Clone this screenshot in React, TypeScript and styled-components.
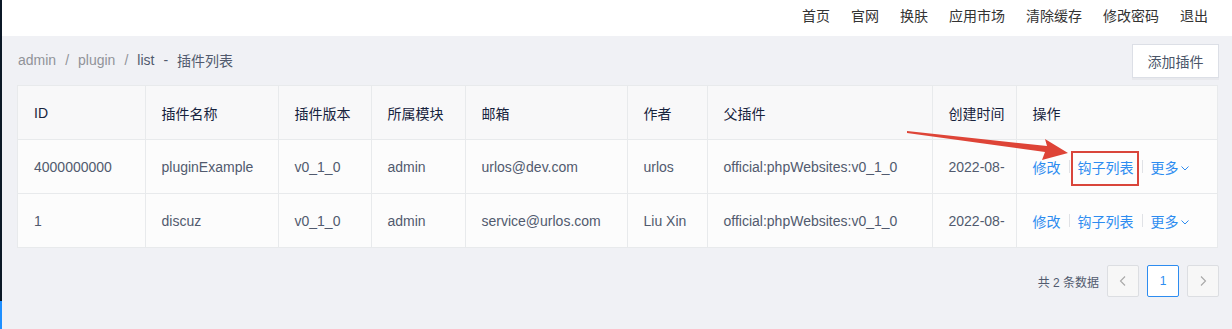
import React from "react";
import styled, { createGlobalStyle } from "styled-components";

const Global = createGlobalStyle`
  html, body { margin: 0; padding: 0; }
  body {
    font-family: "Liberation Sans", "Noto Sans CJK SC", sans-serif;
    background: #f0f1f5;
    -webkit-font-smoothing: antialiased;
  }
`;

const Page = styled.div`
  display: flex;
  width: 1232px;
  height: 329px;
  overflow: hidden;
  position: relative;
  background: #f0f1f5;
`;

const Sidebar = styled.div`
  width: 2px;
  flex: none;
  display: flex;
  flex-direction: column;
  background: #0b1826;
`;

const SidebarActive = styled.div`
  margin-top: auto;
  height: 28px;
  background: #1e8fff;
`;

const Main = styled.div`
  flex: 1;
  display: flex;
  flex-direction: column;
  min-width: 0;
`;

const Header = styled.div`
  height: 36px;
  background: #fff;
  display: flex;
  align-items: center;
  justify-content: flex-end;
  padding-right: 24px;
  gap: 21px;
`;

const NavItem = styled.span`
  font-size: 14px;
  color: #333;
  line-height: 20px;
  margin-top: -4px;
`;

const Content = styled.div`
  padding: 8px 14px 0 15px;
  display: flex;
  flex-direction: column;
`;

const TopRow = styled.div`
  display: flex;
  align-items: flex-start;
  justify-content: space-between;
  height: 34px;
`;

const Crumbs = styled.div`
  display: flex;
  align-items: center;
  gap: 9px;
  font-size: 14px;
  margin-top: 6px;
  margin-left: 1px;
`;

const Crumb = styled.span<{ $current?: boolean }>`
  color: ${(p) => (p.$current ? "#515a6e" : "#909399")};
`;

const AddButton = styled.button`
  width: 87px;
  height: 34px;
  background: #fff;
  border: 1px solid #dcdfe6;
  box-shadow: 0 2px 0 rgba(0, 0, 0, 0.03);
  font-family: inherit;
  font-size: 14px;
  color: #4a5568;
  padding: 0;
  margin-right: -1px;
`;

const TableWrap = styled.div`
  margin-top: 7px;
  border: 1px solid #e8eaec;
  background: #fcfcfc;
  overflow: hidden;
`;

const Table = styled.table`
  border-collapse: collapse;
  table-layout: fixed;
  width: 1198px;
  font-size: 14px;
`;

const Th = styled.th<{ $fixed?: boolean }>`
  height: 53px;
  text-align: left;
  font-weight: normal;
  color: #17233d;
  padding: 0 0 0 16px;
  background: #f8f8f9;
  border-right: 1px solid #e8eaec;
  border-bottom: 1px solid #e8eaec;
  white-space: nowrap;
  overflow: hidden;
  ${(p) =>
    p.$fixed &&
    `position: relative; box-shadow: -4px 0 7px rgba(0,0,0,0.1); border-right: none; background: #fafafa;`}
`;

const Td = styled.td<{ $fixed?: boolean }>`
  height: 53px;
  color: #515a6e;
  padding: 0 0 0 16px;
  border-right: 1px solid #e8eaec;
  border-bottom: 1px solid #e8eaec;
  white-space: nowrap;
  overflow: hidden;
  background: #fcfcfc;
  ${(p) =>
    p.$fixed &&
    `position: relative; box-shadow: -4px 0 7px rgba(0,0,0,0.1); border-right: none; background: #fdfdfd;`}
  tr:last-child & {
    border-bottom: none;
  }
`;

const Actions = styled.div`
  display: flex;
  align-items: center;
`;

const ActionLink = styled.span`
  color: #2d8cf0;
  font-size: 14px;
  display: inline-flex;
  align-items: center;
`;

const Divider = styled.span`
  width: 1px;
  height: 13px;
  background: #e0e2e6;
  margin: 0 8px;
`;

const Pager = styled.div`
  display: flex;
  justify-content: flex-end;
  align-items: center;
  margin-top: 17px;
  gap: 8px;
  margin-right: -1px;
`;

const Total = styled.span`
  font-size: 12px;
  color: #515a6e;
`;

const PageBtn = styled.div<{ $active?: boolean }>`
  width: 32px;
  height: 32px;
  box-sizing: border-box;
  border: 1px solid ${(p) => (p.$active ? "#2d8cf0" : "#dcdee2")};
  background: ${(p) => (p.$active ? "#fff" : "#f7f7f7")};
  color: ${(p) => (p.$active ? "#2d8cf0" : "#aaa")};
  border-radius: 2px;
  display: flex;
  align-items: center;
  justify-content: center;
  font-size: 12px;
`;

const Annotation = styled.svg`
  position: absolute;
  left: 0;
  top: 0;
  pointer-events: none;
`;

const cols = [127, 133, 93, 94, 162, 80, 225, 84, 202];
const heads = ["ID", "插件名称", "插件版本", "所属模块", "邮箱", "作者", "父插件", "创建时间", "操作"];
const rows = [
  ["4000000000", "pluginExample", "v0_1_0", "admin", "urlos@dev.com", "urlos", "official:phpWebsites:v0_1_0", "2022-08-"],
  ["1", "discuz", "v0_1_0", "admin", "service@urlos.com", "Liu Xin", "official:phpWebsites:v0_1_0", "2022-08-"],
];

const Chevron = () => (
  <svg width="10" height="10" viewBox="0 0 10 10" style={{ marginLeft: 1, marginTop: 2 }}>
    <path d="M1.5 3.5 L5 7 L8.5 3.5" fill="none" stroke="#2d8cf0" strokeWidth="1" />
  </svg>
);

const PrevIcon = () => (
  <svg width="14" height="14" viewBox="0 0 14 14">
    <path d="M9 2.5 L4.5 7 L9 11.5" fill="none" stroke="#a8a8a8" strokeWidth="1.1" />
  </svg>
);

const NextIcon = () => (
  <svg width="14" height="14" viewBox="0 0 14 14">
    <path d="M5 2.5 L9.5 7 L5 11.5" fill="none" stroke="#a8a8a8" strokeWidth="1.1" />
  </svg>
);

export default function App() {
  return (
    <>
      <Global />
      <Page>
        <Sidebar>
          <SidebarActive />
        </Sidebar>
        <Main>
          <Header>
            {["首页", "官网", "换肤", "应用市场", "清除缓存", "修改密码", "退出"].map((t) => (
              <NavItem key={t}>{t}</NavItem>
            ))}
          </Header>
          <Content>
            <TopRow>
              <Crumbs>
                <Crumb>admin</Crumb>
                <Crumb>/</Crumb>
                <Crumb>plugin</Crumb>
                <Crumb>/</Crumb>
                <Crumb $current>list</Crumb>
                <Crumb $current>-</Crumb>
                <Crumb $current>插件列表</Crumb>
              </Crumbs>
              <AddButton>添加插件</AddButton>
            </TopRow>
            <TableWrap>
              <Table>
                <colgroup>
                  {cols.map((w, i) => (
                    <col key={i} style={{ width: w }} />
                  ))}
                </colgroup>
                <thead>
                  <tr>
                    {heads.map((h, i) => (
                      <Th key={h} $fixed={i === heads.length - 1}>
                        {h}
                      </Th>
                    ))}
                  </tr>
                </thead>
                <tbody>
                  {rows.map((r) => (
                    <tr key={r[0]}>
                      {r.map((c, i) => (
                        <Td key={i}>{c}</Td>
                      ))}
                      <Td $fixed>
                        <Actions>
                          <ActionLink>修改</ActionLink>
                          <Divider />
                          <ActionLink>钩子列表</ActionLink>
                          <Divider />
                          <ActionLink>
                            更多
                            <Chevron />
                          </ActionLink>
                        </Actions>
                      </Td>
                    </tr>
                  ))}
                </tbody>
              </Table>
            </TableWrap>
            <Pager>
              <Total>共 2 条数据</Total>
              <PageBtn>
                <PrevIcon />
              </PageBtn>
              <PageBtn $active>1</PageBtn>
              <PageBtn>
                <NextIcon />
              </PageBtn>
            </Pager>
          </Content>
        </Main>
        <Annotation width="1232" height="329" viewBox="0 0 1232 329">
          <polygon points="907,131 1047,146 1045,139 1068,153 1042,160 1045,152 907,133" fill="#de4437" />
          <rect x="1072" y="152" width="66" height="33" fill="none" stroke="#d9453b" strokeWidth="2" />
        </Annotation>
      </Page>
    </>
  );
}
